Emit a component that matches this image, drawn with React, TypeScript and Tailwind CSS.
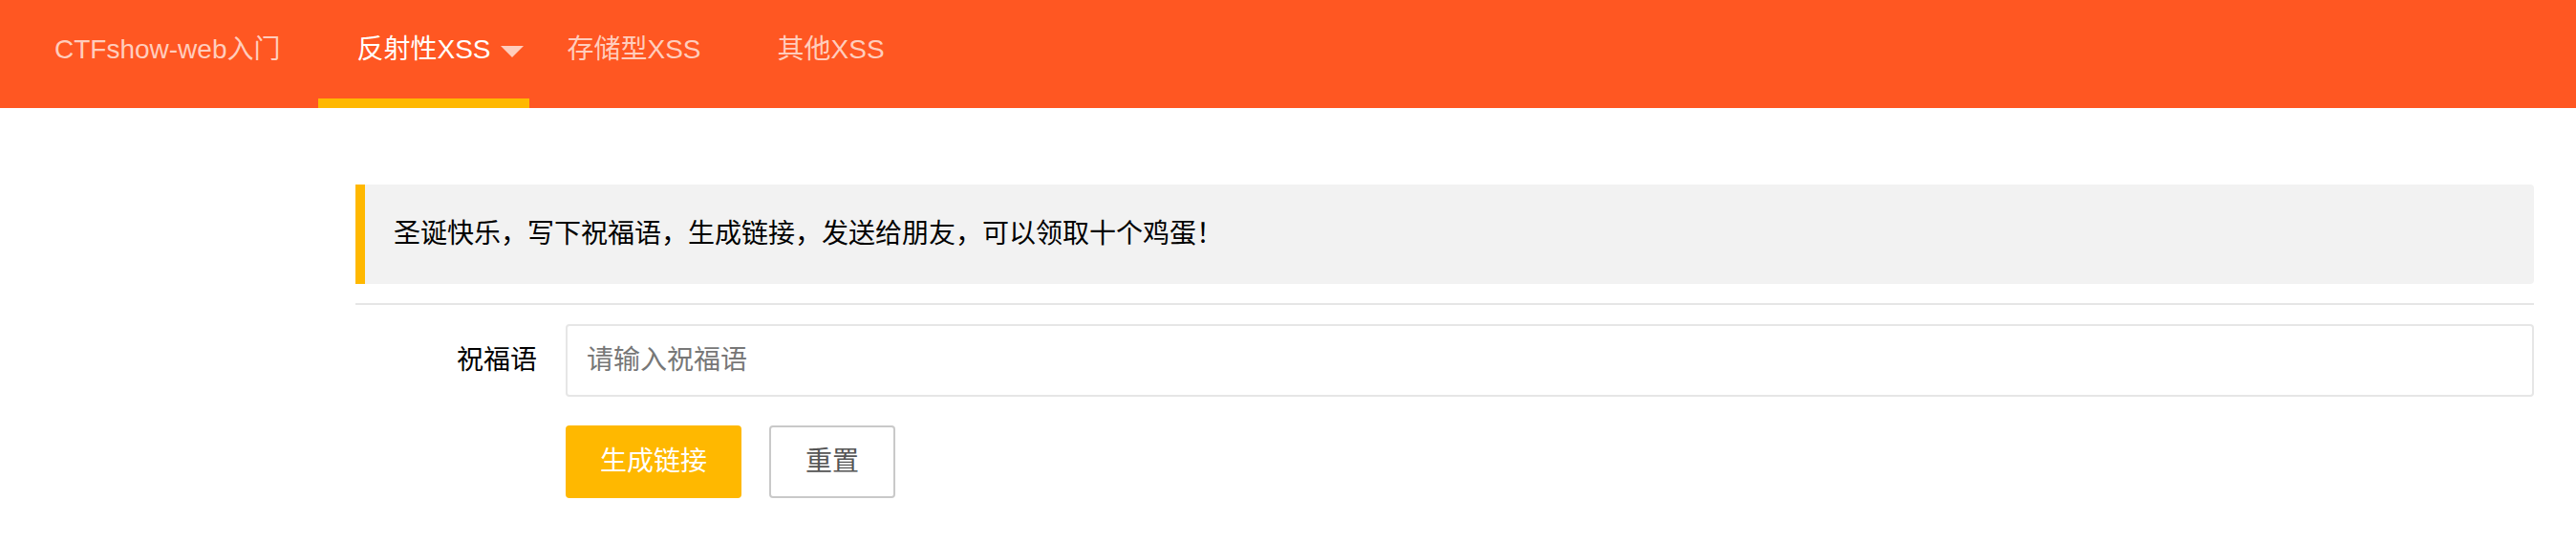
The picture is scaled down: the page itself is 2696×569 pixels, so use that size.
const navItems = [
  { label: "CTFshow-web入门", active: false, more: false },
  { label: "反射性XSS", active: true, more: true },
  { label: "存储型XSS", active: false, more: false },
  { label: "其他XSS", active: false, more: false },
];

export default function App() {
  return (
    <div className="w-full min-h-screen bg-white font-['Liberation_Sans','Noto_Sans_CJK_SC',sans-serif]">
      <nav className="h-[113px] bg-[#FF5722] flex pl-[17px]">
        {navItems.map((item, idx) => (
          <div key={idx} className="flex flex-col">
            <div
              className={`h-[103px] flex items-center pl-[40px] text-[28px] whitespace-nowrap ${
                item.more ? "pr-[6px]" : "pr-[40px]"
              } ${item.active ? "text-white" : "text-[#ffcdbd]"}`}
            >
              <span>{item.label}</span>
              {item.more && (
                <span className="ml-[10px] mt-[4px] w-0 h-0 border-l-[12px] border-r-[12px] border-t-[12px] border-l-transparent border-r-transparent border-t-[#ffcdbd]" />
              )}
            </div>
            <div className={`h-[10px] ${item.active ? "bg-[#FFB800]" : ""}`} />
          </div>
        ))}
      </nav>

      <div className="pl-[372px] pr-[44px] pt-[80px]">
        <blockquote className="border-l-[10px] border-[#FFB800] bg-[#f2f2f2] rounded-r-[4px] px-[30px] py-[30px] text-[28px] leading-[44px] text-black">
          圣诞快乐，写下祝福语，生成链接，发送给朋友，可以领取十个鸡蛋！
        </blockquote>

        <hr className="mt-[20px] border-0 border-t-2 border-[#e6e6e6]" />

        <div className="mt-[20px] flex items-center">
          <label className="w-[220px] pr-[30px] text-right text-[28px] text-black">祝福语</label>
          <input
            className="flex-1 h-[76px] border-2 border-[#e6e6e6] rounded-[4px] px-[20px] text-[28px] text-black outline-none placeholder:text-[#777777]"
            placeholder="请输入祝福语"
          />
        </div>

        <div className="mt-[30px] pl-[220px] flex gap-[29px]">
          <button className="h-[76px] px-[36px] rounded-[4px] bg-[#FFB800] text-white text-[28px]">
            生成链接
          </button>
          <button className="h-[76px] px-[36px] rounded-[4px] border-2 border-[#C9C9C9] bg-white text-[#555555] text-[28px]">
            重置
          </button>
        </div>
      </div>
    </div>
  );
}
